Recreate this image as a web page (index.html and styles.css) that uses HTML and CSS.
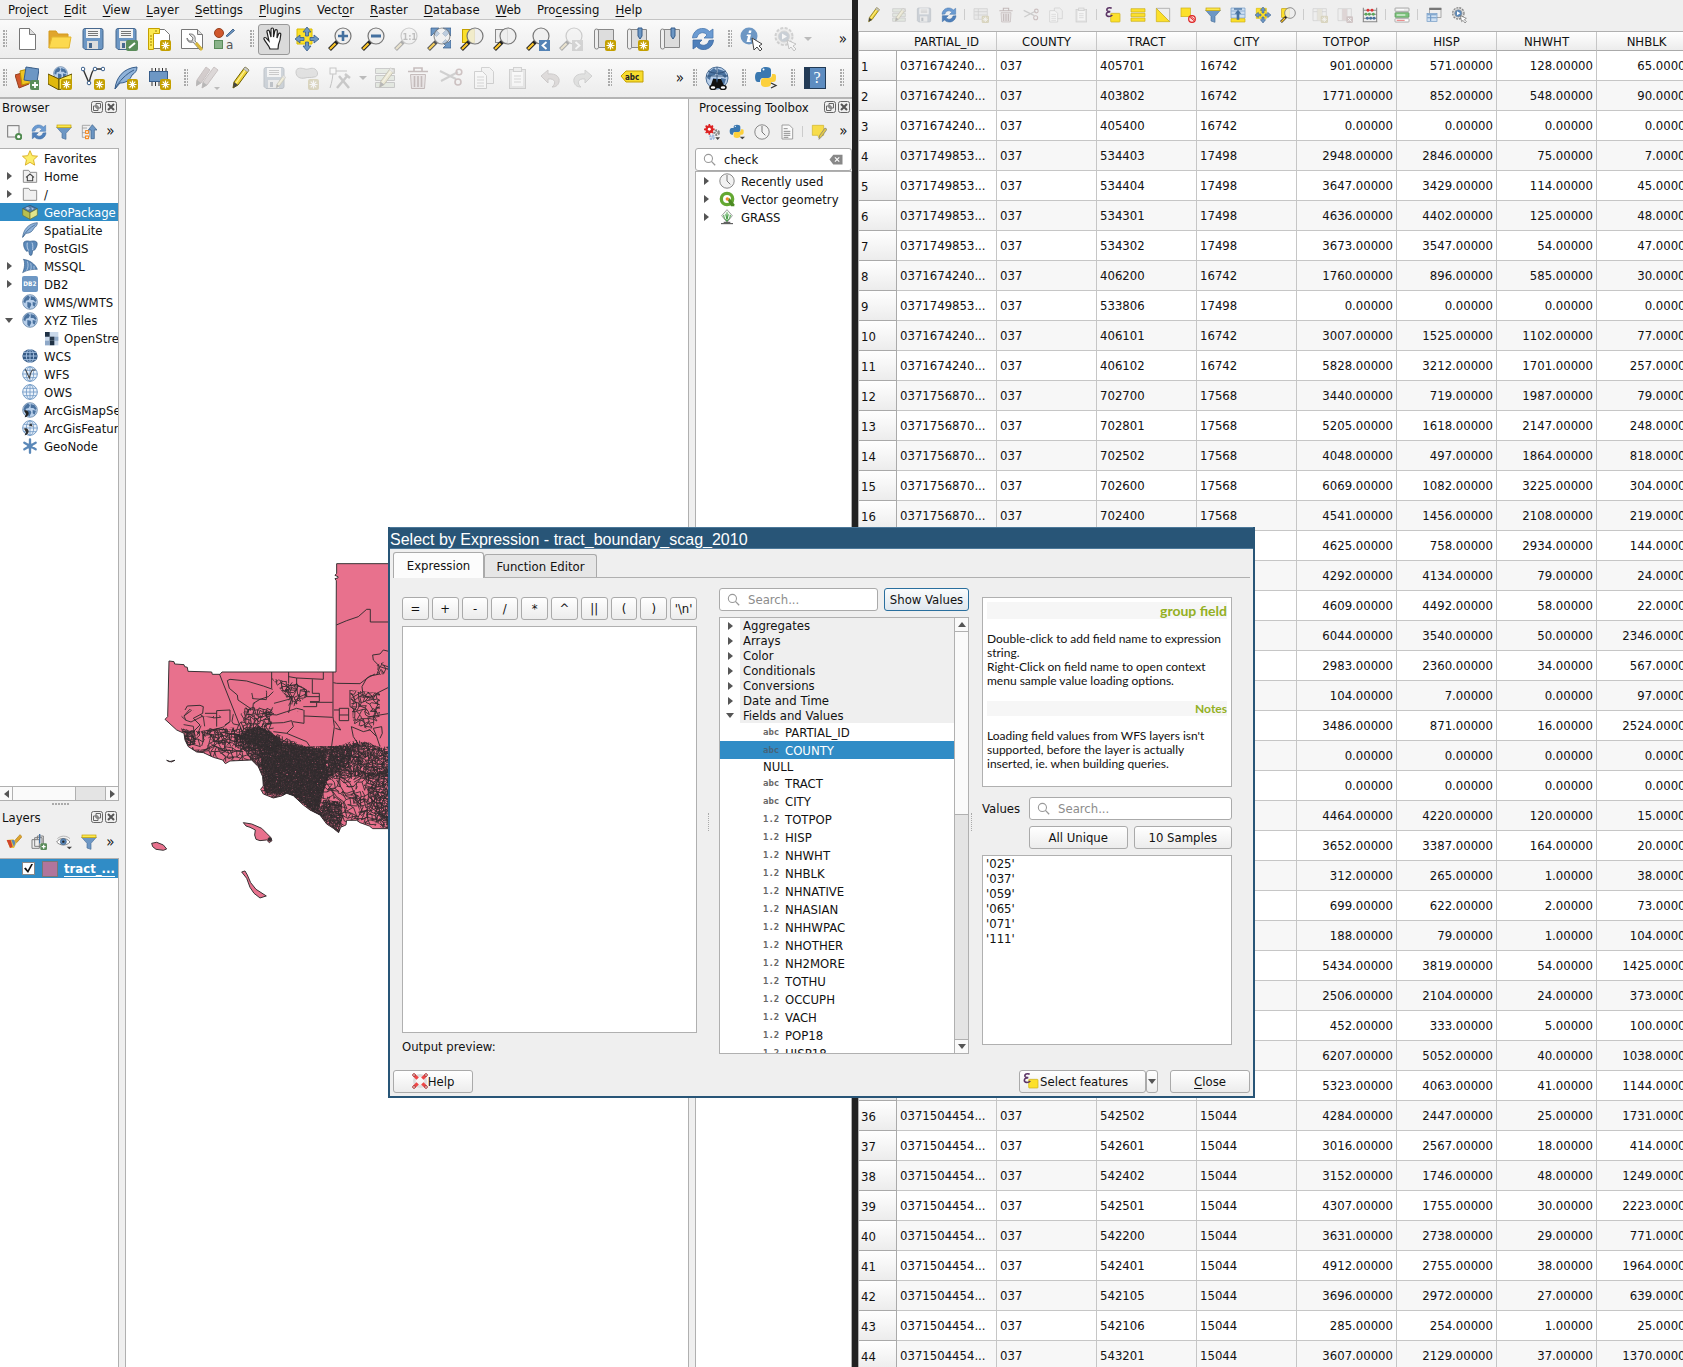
FILE: index.html
```html
<!DOCTYPE html>
<html lang="en">
<head>
<meta charset="utf-8">
<title>QGIS - Select by Expression</title>
<link rel="stylesheet" href="styles.css">
</head>
<body>
<svg class="defs" aria-hidden="true">
  <symbol id="star" viewBox="0 0 24 24"><rect x="13" y="13" width="11" height="11" rx="2" fill="#c4a000"/><path d="M18.500 14.500v8M14.500 18.500h8M15.700 15.700l5.600 5.600M21.300 15.700l-5.600 5.600" stroke="#fff" stroke-width="1.200"/></symbol>
  <symbol id="new" viewBox="0 0 24 24"><path d="M4.500 1.500h10l6 6v15h-16z" fill="#fff" stroke="#777"/><path d="M14.500 1.500v6h6" fill="#ddd" stroke="#777"/></symbol>
  <symbol id="open" viewBox="0 0 24 24"><path d="M1 21V4h7l2 3h10v3" fill="#e0a52c" stroke="#d49a1c"/><path d="M1 21l3-11h19l-2 11z" fill="#fcd94f" stroke="#e3b62f"/></symbol>
  <symbol id="save" viewBox="0 0 24 24"><path d="M2 3.500q0-2 2-2h16q2 0 2 2v17q0 2-2 2H4l-2-2z" fill="#6d97c4" stroke="#47688e"/><rect x="5" y="2" width="14" height="9" fill="#f3f3f3"/><path d="M7 4.500h10M7 6.500h10M7 8.500h10" stroke="#555" stroke-width=".8"/><rect x="6" y="14" width="11" height="8" fill="#ddd"/><rect x="8" y="16" width="3" height="5" fill="#47688e"/></symbol>
  <symbol id="saveas" viewBox="0 0 24 24"><use href="#save"/><rect x="12" y="13" width="12" height="11" rx="2" fill="#5a8c5a"/><path d="M15 21l6-5" stroke="#fff" stroke-width="2"/></symbol>
  <symbol id="layout" viewBox="0 0 24 24"><path d="M2.500 2.500h15l5 5v14h-20z" fill="#fff" stroke="#777"/><path d="M1.500 1.500h11v5h-6v16h-5z" fill="#fce94f" stroke="#c4a000"/><path d="M3 9h2M3 12h2M3 15h2M3 18h2M9 3v2" stroke="#a08000"/><use href="#star"/></symbol>
  <symbol id="layoutm" viewBox="0 0 24 24"><path d="M1.500 2.500h16l5 5v14h-21z" fill="#fff" stroke="#777"/><path d="M17.500 2.500v5h5" fill="#ddd" stroke="#777"/><path d="M9 7l4 4-1 3-3 0-2-3c0 4 3 5 6 4l7 8 2-2-7-7c1-4-1-7-4-7z" fill="#ddd" stroke="#666" stroke-width=".8"/><path d="M16 16l6 7" stroke="#d8b83c" stroke-width="3"/></symbol>
  <symbol id="style" viewBox="0 0 24 24"><circle cx="6" cy="6" r="4.500" fill="#d0572c" stroke="#96401f"/><path d="M13 9L20 2l1.500 1.500-7 6z" fill="#6d97c4" stroke="#47688e"/><rect x="1.500" y="13.500" width="8" height="8" fill="#8ab38a" stroke="#5a8c5a"/><text x="13" y="22" font-family="DejaVu Sans" font-size="12" fill="#555">a</text></symbol>
  <symbol id="hand" viewBox="0 0 24 24"><path d="M8 22c-1-4-5-7-6-10-.5-2 2-2 3 0l2 2L5 5c-.5-2 2-2.500 2.500-.5L9 10 9 2.500c0-2 2.500-2 2.500 0V10l1.300-6c.4-2 2.700-1.600 2.500.3L15 11l1.500-4c.7-1.600 2.500-1 2.300.5-.3 4-1 7-2.300 10L16 22z" fill="#fff" stroke="#222" stroke-width="1.200"/></symbol>
  <symbol id="arrows4" viewBox="0 0 24 24"><path d="M12 0l4 5h-2.500v4h-3V5H8zM12 24l4-5h-2.500v-4h-3v4H8zM0 12l5-4v2.500h4v3H5V16zM24 12l-5-4v2.500h-4v3h4V16z" fill="#6d97c4" stroke="#375d8a" stroke-width=".8"/></symbol>
  <symbol id="pansel" viewBox="0 0 24 24"><path d="M2 2h15v15H2z" fill="#fce02a" stroke="#d6ba00"/><use href="#arrows4"/></symbol>
  <symbol id="mag" viewBox="0 0 24 24"><path d="M9.500 14.500L1.500 22.500" stroke="#222" stroke-width="4"/><path d="M7.500 16.500L2 22" stroke="#fcc62a" stroke-width="2.200"/><circle cx="15" cy="9" r="8" fill="#eee" fill-opacity=".82" stroke="#777" stroke-width="1.200"/></symbol>
  <symbol id="zin" viewBox="0 0 24 24"><use href="#mag"/><path d="M15 4v10M10 9h10" stroke="#44709f" stroke-width="2.600"/></symbol>
  <symbol id="zout" viewBox="0 0 24 24"><use href="#mag"/><path d="M10 9h10" stroke="#44709f" stroke-width="3"/></symbol>
  <symbol id="z11" viewBox="0 0 24 24"><use href="#mag"/><text x="8.500" y="13" font-family="DejaVu Sans Condensed" font-weight="bold" font-size="9" fill="#555">1:1</text></symbol>
  <symbol id="zfull" viewBox="0 0 24 24"><path d="M4 1h8L9.500 3.500l3 3-3 3-3-3L4 9zM24 1v8l-2.500-2.500-3 3-3-3 3-3L16 1zM24 21h-8l2.500-2.500-3-3 3-3 3 3L24 13z" fill="#6d97c4" stroke="#375d8a" stroke-width=".7"/><use href="#mag" opacity=".75"/></symbol>
  <symbol id="zsel" viewBox="0 0 24 24"><rect x="2.500" y="2.500" width="12" height="13" fill="#fce02a" stroke="#c4a000"/><use href="#mag"/></symbol>
  <symbol id="zlay" viewBox="0 0 24 24"><rect x="2.500" y="2.500" width="12" height="13" fill="#eee" stroke="#888"/><use href="#mag"/></symbol>
  <symbol id="zlast" viewBox="0 0 24 24"><use href="#mag"/><rect x="13" y="13" width="11" height="11" fill="#5382b5"/><path d="M20.500 15l-4 3.500 4 3.500" fill="none" stroke="#fff" stroke-width="1.800"/></symbol>
  <symbol id="znext" viewBox="0 0 24 24"><use href="#mag"/><rect x="13" y="13" width="11" height="11" fill="#999"/><path d="M16.500 15l4 3.500-4 3.500" fill="none" stroke="#fff" stroke-width="1.800"/></symbol>
  <symbol id="book" viewBox="0 0 24 24"><path d="M4 2.500h17.500v18H4z" fill="#ddd" stroke="#888"/><path d="M2.500 20V4q0-2 2-2t2 2v16.500q0 1.500-2 1.500t-2-2z" fill="#eee" stroke="#888"/></symbol>
  <symbol id="newmap" viewBox="0 0 24 24"><use href="#book"/><use href="#star"/></symbol>
  <symbol id="marks" viewBox="0 0 24 24"><use href="#book"/><path d="M13 1h4v8l-2 3-2-3z" fill="#6d97c4" stroke="#375d8a"/></symbol>
  <symbol id="newmark" viewBox="0 0 24 24"><use href="#marks"/><use href="#star"/></symbol>
  <symbol id="refresh" viewBox="0 0 24 24"><path d="M1.500 11C2 4 8 1 12 1.500c3 0 5 1.500 6.500 3L22 2v9h-9l3-3c-3-4-9-2.500-10 2.500z" fill="#6b9bd2" stroke="#4a79b0" stroke-width=".8"/><path d="M22.500 13c-.5 7-6.500 10-10.500 9.500-3 0-5-1.500-6.500-3L2 22v-9h9l-3 3c3 4 9 2.500 10-2.500z" fill="#4f80bb" stroke="#3d6ba3" stroke-width=".8"/></symbol>
  <symbol id="ident" viewBox="0 0 24 24"><circle cx="9" cy="9" r="8.500" fill="#6d97c4"/><path d="M9 3.500h2.500L11 6H8.500zM7 7.500h4l-1.500 6H11l-.5 1.500H6.500l1.500-6H6.500z" fill="#fff"/><path d="M12 11l2 12 3-3 3 4 2-2-3-3 3-2z" fill="#fff" stroke="#444"/></symbol>
  <symbol id="gearrun" viewBox="0 0 24 24"><circle cx="11" cy="9.500" r="8.500" fill="#ddd" stroke="#888" stroke-width="2" stroke-dasharray="3 1.500"/><circle cx="11" cy="9.500" r="5.500" fill="#5b88b8" stroke="#999"/><path d="M9 6.500v6l5-3z" fill="#fff"/><path d="M14 13l2 9 2-2 3 4 2-2-3-3 3-2z" fill="#fff" stroke="#666"/></symbol>
  <symbol id="data" viewBox="0 0 24 24"><path d="M0 9l10-3 4 12-10 4z" fill="#d0572c" stroke="#96401f"/><path d="M5 5l12-3 1 14-11 3z" fill="#f0c422" stroke="#b89000"/><path d="M11 1l13 2-2 13-13-2z" fill="#6d97c4" stroke="#375d8a"/><rect x="15" y="14" width="10" height="10" rx="2" fill="#5a8c5a"/><path d="M20 16v6M17 19h6" stroke="#fff" stroke-width="1.800"/></symbol>
  <symbol id="globe" viewBox="0 0 24 24"><circle cx="12" cy="12" r="11" fill="#b8cfea" stroke="#4f7197"/><path d="M4 6l5-4 3 3-2 4-4 1-1 4-3-2zM13 3l6 2 3 5-2 2-3-3-4 0zM8 12l5 1 1 3-3 6-3-3zM16 12l5 1-2 6-3-2z" fill="#4a729f"/></symbol>
  <symbol id="gpkg" viewBox="0 0 24 24"><use href="#globe" x="5" y="0" width="15" height="15"/><path d="M0 8l11 5v11L0 18z" fill="#e0b80e" stroke="#5d4c00"/><path d="M24 8l-13 5v11l13-6z" fill="#fce94f" stroke="#5d4c00"/></symbol>
  <symbol id="gpkgn" viewBox="0 0 24 24"><use href="#gpkg"/><use href="#star"/></symbol>
  <symbol id="vee" viewBox="0 0 24 24"><path d="M2 3l6 14c2-9 4-14 6-14h8" fill="none" stroke="#333" stroke-width="1.400"/><g fill="#fff" stroke="#375d8a"><circle cx="2" cy="3" r="1.800"/><circle cx="8" cy="17" r="1.800"/><circle cx="14" cy="3" r="1.800"/><circle cx="22" cy="3" r="1.800"/></g><use href="#star"/></symbol>
  <symbol id="feather" viewBox="0 0 24 24"><path d="M1 23C2 12 9 2 23 1c0 4-2 6-5 8-2 5-6 8-12 8z" fill="#8fb2d9" stroke="#375d8a"/><path d="M1 23C5 15 12 8 20 4" fill="none" stroke="#375d8a"/></symbol>
  <symbol id="feathern" viewBox="0 0 24 24"><use href="#feather"/><use href="#star"/></symbol>
  <symbol id="chip" viewBox="0 0 24 24"><path d="M5 2v18M8.500 2v18M12 2v18M15.500 2v18M19 2v18" stroke="#333"/><rect x="2.500" y="5.500" width="18" height="10" fill="#6d97c4" stroke="#375d8a"/><use href="#star"/></symbol>
  <symbol id="pencil" viewBox="0 0 24 24"><path d="M4 22l1-6L16 1l4 3L9 19z" fill="#f0d43a" stroke="#6f6000"/><path d="M7 17L17 3" stroke="#fff4a0" stroke-width="1.200"/><path d="M4 22l1-6 4 3z" fill="#444"/><path d="M16 1l4 3-1.500 2-4-3z" fill="#ccc" stroke="#888" stroke-width=".5"/></symbol>
  <symbol id="pencils" viewBox="0 0 24 24"><path d="M0 20l1-6L10 1l4 3L5 17z" fill="#a77" stroke="#855"/><path d="M6 22l1-6L18 1l4 3-11 15z" fill="#b99" stroke="#855"/><path d="M0 20l1-6 4 3zM6 22l1-6 4 3z" fill="#444"/><path d="M18 21h6l-3 3z" fill="#555"/></symbol>
  <symbol id="saveed" viewBox="0 0 24 24"><use href="#save"/><use href="#pencil" x="12" y="9" width="14" height="14"/></symbol>
  <symbol id="blob" viewBox="0 0 24 24"><path d="M1 6c0-5 6-4 9-3s6-2 10 0c4 3 3 8-1 8-4 1-6 0-9 1-5 1-9-1-9-6z" fill="#bbb" stroke="#777"/><use href="#star"/></symbol>
  <symbol id="vertex" viewBox="0 0 24 24"><path d="M2 22C4 16 5 10 5 5h14" fill="none" stroke="#666"/><rect x="2" y="2" width="6" height="6" fill="#fff" stroke="#666"/><path d="M9 22L20 9M11 10l10 12M17 8l5 4" stroke="#777" stroke-width="2.500"/></symbol>
  <symbol id="modify" viewBox="0 0 24 24"><path d="M2.500 2.500h19v5h-19zM2.500 9.500h19v5h-19zM2.500 16.500h19v5h-19z" fill="#bda" stroke="#777"/><use href="#pencil" x="3" y="1" width="22" height="22"/></symbol>
  <symbol id="trash" viewBox="0 0 24 24"><path d="M4.500 8.500h15l-1 14h-13z" fill="#e2c8cc" stroke="#844"/><path d="M2 5.500h20M8 5V2h8v3M8.500 10v11M12 10v11M15.500 10v11" fill="none" stroke="#844" stroke-width="1.600"/></symbol>
  <symbol id="cut" viewBox="0 0 24 24"><path d="M1 5l16 8M2 15l17-9" stroke="#888" stroke-width="2"/><circle cx="20" cy="6" r="2.800" fill="none" stroke="#a55" stroke-width="1.600"/><circle cx="19" cy="16" r="3" fill="none" stroke="#a55" stroke-width="1.600"/></symbol>
  <symbol id="copy" viewBox="0 0 24 24"><path d="M9.500 1.500h8l4 4v12h-12z" fill="#eee" stroke="#888"/><path d="M2.500 5.500h8l4 4v13h-12z" fill="#fff" stroke="#888"/><path d="M5 11h7M5 14h7M5 17h7M5 20h7" stroke="#999"/></symbol>
  <symbol id="paste" viewBox="0 0 24 24"><rect x="4.500" y="3.500" width="16" height="19" fill="#ccc" stroke="#888"/><rect x="7" y="6" width="11" height="14" fill="#fff"/><rect x="8.500" y="1.500" width="8" height="4" fill="#ddd" stroke="#888"/><path d="M9 10h7M9 13h7M9 16h7" stroke="#999"/></symbol>
  <symbol id="undo" viewBox="0 0 24 24"><path d="M3 10l7-6v4c9-1 12 4 11 8-1 4-4 5-7 5 4-3 4-9-4-8v4z" fill="#c0a8a4" stroke="#8a7774"/></symbol>
  <symbol id="redo" viewBox="0 0 24 24"><path d="M21 10l-7-6v4C5 7 2 12 3 16c1 4 4 5 7 5-4-3-4-9 4-8v4z" fill="#b9bbb8" stroke="#888"/></symbol>
  <symbol id="abc" viewBox="0 0 24 24"><path d="M1 10l5-5h17v11H6z" fill="#f7dc2e" stroke="#c4a000"/><text x="5" y="13.500" font-family="DejaVu Sans Condensed" font-weight="bold" font-size="8" fill="#222">abc</text></symbol>
  <symbol id="metas" viewBox="0 0 24 24"><use href="#globe"/><path d="M1 10h22M12 1v14M3 5c6 3 12 3 18 0" fill="none" stroke="#27466d" stroke-width=".8"/><path d="M5 22l3-9h3l1 4 1-4h3l4 9z" fill="#111"/><ellipse cx="8" cy="21.500" rx="3" ry="2" fill="#fff" stroke="#111" stroke-width="1.500"/><ellipse cx="18" cy="21.500" rx="3" ry="2" fill="#fff" stroke="#111" stroke-width="1.500"/></symbol>
  <symbol id="py" viewBox="0 0 24 24"><path d="M7 6V4c0-2 2-3 5-3s5 1 5 3v5c0 2-1 3-3 3H9c-2 0-3 1-3 4H4c-2 0-3-2-3-5s1-5 3-5h8z" fill="#3a78b0"/><path d="M17 16v2c0 2-2 3-5 3s-5-1-5-3v-3c0-2 1-3 3-3h5c2 0 3-1 3-4h2c2 0 2 1 2 4s-1 4-3 4h-7z" fill="#fcd03c"/><circle cx="9.500" cy="3.500" r="1" fill="#fff"/></symbol>
  <symbol id="pymenu" viewBox="0 0 24 24"><use href="#py"/><path d="M16 19h8l-4 4z" fill="#444"/></symbol>
  <symbol id="pycon" viewBox="0 0 24 24"><use href="#py"/><path d="M17 17l5 2.500-5 2.500" fill="none" stroke="#333" stroke-width="1.300"/></symbol>
  <symbol id="helpbook" viewBox="0 0 24 24"><rect x="1.500" y="1.500" width="21" height="21" fill="#5d8cc0" stroke="#223a55"/><path d="M2 2h5v20H2z" fill="#223a55"/><text x="10.500" y="17" font-family="Liberation Serif" font-size="16" fill="#fff">?</text></symbol>
  <symbol id="addlayer" viewBox="0 0 24 24"><rect x="2.500" y="2.500" width="17" height="17" fill="#f4f4f4" stroke="#777" stroke-width="1.500"/><circle cx="19" cy="19" r="4" fill="#fff" stroke="#4f8a4f" stroke-width="3"/></symbol>
  <symbol id="funnel" viewBox="0 0 24 24"><path d="M1 5h22l-8 9v9l-6-2v-7z" fill="#6d97c4" stroke="#4a6f9a"/><rect x="1.500" y="1.500" width="21" height="4" fill="#fce94f" stroke="#c4a000"/></symbol>
  <symbol id="collapse" viewBox="0 0 24 24"><path d="M2 2v18M2 6h7M2 13h5M2 20h5M2 2h12M13 10v10" fill="none" stroke="#888"/><rect x="7" y="10" width="4" height="4" fill="#fff" stroke="#f57900" stroke-width="1.500"/><rect x="7" y="18" width="4" height="4" fill="#fff" stroke="#f57900" stroke-width="1.500"/><path d="M17 1l7 8h-4v13h-5V9h-4z" fill="#6d97c4" stroke="#375d8a"/></symbol>
  <symbol id="gears" viewBox="0 0 24 24"><circle cx="8" cy="8" r="4.500" fill="none" stroke="#d22" stroke-width="3"/><path d="M8 0v16M0 8h16M2.500 2.500l11 11M13.500 2.500l-11 11" stroke="#d22" stroke-width="2.400"/><circle cx="8" cy="8" r="2.200" fill="#fff"/><circle cx="19" cy="13" r="3" fill="none" stroke="#888" stroke-width="4" stroke-dasharray="2.400 1.200"/><circle cx="12" cy="20" r="2.500" fill="none" stroke="#9fb8dc" stroke-width="4" stroke-dasharray="2.400 1.200"/><path d="M17 20h7l-3.500 4z" fill="#444"/></symbol>
  <symbol id="clock" viewBox="0 0 24 24"><circle cx="12" cy="12" r="10.800" fill="#f2f2f2" stroke="#888" stroke-width="1.500"/><path d="M12 3v9l5 5" fill="none" stroke="#777" stroke-width="1.500"/></symbol>
  <symbol id="doc" viewBox="0 0 24 24"><path d="M4.500 1.500h11l5 5v16h-16z" fill="#fafafa" stroke="#999" stroke-width="1.400"/><path d="M7 7h6M7 11h10M7 14h10M7 17h10M7 20h7" stroke="#888" stroke-width="1.400"/></symbol>
  <symbol id="note" viewBox="0 0 24 24"><path d="M2 2h17v15h-5l-2 4-2-4H2z" fill="#f7dc4a" stroke="#cdb22a"/><path d="M12 23l1-6 8-11 3 2-8 11z" fill="#e2c84a" stroke="#777"/></symbol>
  <symbol id="search" viewBox="0 0 24 24"><circle cx="10" cy="10" r="7.500" fill="none" stroke="#999" stroke-width="2"/><path d="M15.500 15.500l7 7" stroke="#999" stroke-width="2.400"/></symbol>
  <symbol id="clear" viewBox="0 0 24 24"><path d="M0 12l7-9h17v18H7z" fill="#888"/><path d="M10 8l8 8M18 8l-8 8" stroke="#fff" stroke-width="2"/></symbol>
  <symbol id="fav" viewBox="0 0 24 24"><path d="M12 1l3.300 7.500 8 .8-6 5.400 1.700 8-7-4.200-7 4.200 1.700-8-6-5.400 8-.8z" fill="#fcee6a" stroke="#d8a818" stroke-width="1.300"/></symbol>
  <symbol id="folder" viewBox="0 0 24 24"><path d="M2 21.500V3.500h8l2 3h10v15z" fill="#f0f0f0" stroke="#888" stroke-width="1.400"/></symbol>
  <symbol id="home" viewBox="0 0 24 24"><use href="#folder"/><path d="M6 14l6-5 6 5M8 13v6h8v-6" fill="none" stroke="#444" stroke-width="1.600"/></symbol>
  <symbol id="box" viewBox="0 0 24 24"><path d="M1 7l11-5 11 5-11 6z" fill="#517ca8" stroke="#2e4f70"/><path d="M5 6l4-2 3 3-3 2zM14 5l4 2-3 2z" fill="#a9c4e4"/><path d="M1 7l11 6v10L1 17z" fill="#b8bf4e" stroke="#6d7430"/><path d="M23 7l-11 6v10l11-6z" fill="#e2e58b" stroke="#6d7430"/></symbol>
  <symbol id="pg" viewBox="0 0 24 24"><path d="M3 3c4-3 8-1 9-1s7-2 10 1c2 3 0 8-3 12-1 1-3 0-3 1l-1 6c-2 2-4 1-4-1l-1-5-3 1C4 15 1 7 3 3z" fill="#5b88b8" stroke="#375d8a"/><path d="M8 4c-1 5 0 9 2 12M15 4c2 4 1 8 1 11" fill="none" stroke="#cfe0f2" stroke-width="1.200"/></symbol>
  <symbol id="ms" viewBox="0 0 24 24"><path d="M2 2c3 3 2 14-1 20 5-3 10-5 22-5-3-8-12-14-21-15z" fill="#5b88b8" stroke="#375d8a"/><path d="M8 5c2 5 1 10-1 14M13 8c1 4 1 7 0 10M18 12v5" fill="none" stroke="#cfe0f2"/></symbol>
  <symbol id="db2" viewBox="0 0 24 24"><rect width="24" height="24" rx="3" fill="#6d97c4"/><text x="2" y="15.500" font-family="DejaVu Sans Condensed" font-weight="bold" font-size="9.500" fill="#fff">DB2</text></symbol>
  <symbol id="osm" viewBox="0 0 24 24"><rect x="3" y="3" width="20" height="20" fill="#c9d8ea"/><path d="M3 3h7v7H3zM10 16h7v7h-7z" fill="#1f3145"/><path d="M3 16h7v7H3zM17 10h6v6h-6z" fill="#8fa9c8"/><path d="M10 10h7v6h-7z" fill="#27384b"/></symbol>
  <symbol id="grid" viewBox="0 0 24 24"><circle cx="12" cy="12" r="11" fill="#e9f1fa" stroke="#6d97c4" stroke-width="1.400"/><path d="M1 12h22M3 6.500h18M3 17.500h18M12 1v22" stroke="#6d97c4" stroke-width="1.200"/><ellipse cx="12" cy="12" rx="5.500" ry="11" fill="none" stroke="#6d97c4" stroke-width="1.200"/></symbol>
  <symbol id="wcs" viewBox="0 0 24 24"><ellipse cx="12" cy="12" rx="11.500" ry="10" fill="#355a85"/><path d="M1 12h22M3 6.500h18M3 17.500h18M12 2v20" stroke="#a9c4e4" stroke-width="1.400"/><ellipse cx="12" cy="12" rx="5.500" ry="10" fill="none" stroke="#a9c4e4" stroke-width="1.400"/></symbol>
  <symbol id="wfs" viewBox="0 0 24 24"><use href="#grid"/><path d="M5 5l6 13c2-8 3-12 5-12h4" fill="none" stroke="#444" stroke-width="1.600"/></symbol>
  <symbol id="arcm" viewBox="0 0 24 24"><use href="#globe"/><path d="M3 13c4-2 7 1 7 4s-3 6-6 6l2-5z" fill="#222"/></symbol>
  <symbol id="arcf" viewBox="0 0 24 24"><use href="#grid"/><path d="M3 13c4-2 7 1 7 4s-3 6-6 6l2-5zM10 8l4-3 2 5z" fill="#333"/></symbol>
  <symbol id="geonode" viewBox="0 0 24 24"><path d="M12 2v20M3.500 7l17 10M20.500 7l-17 10" stroke="#5b88b8" stroke-width="3.500" stroke-linecap="round"/><circle cx="12" cy="12" r="4" fill="#5b88b8"/></symbol>
  <symbol id="brush" viewBox="0 0 24 24"><path d="M13 10L21 1l3 3-8 9z" fill="#e0a52c" stroke="#a87a1c"/><path d="M1 9l10-1 5 5-4 8H6z" fill="#e8c03c"/><path d="M1 9l6 0 3 10-4 2z" fill="#d0452c"/><path d="M8 9l4 0 2 4-2 6z" fill="#5b88b8"/></symbol>
  <symbol id="addgrp" viewBox="0 0 24 24"><path d="M1.500 8.500h11v13h-11zM5.500 5.500h11v13h-11z" fill="#eee" stroke="#777" stroke-width="1.400"/><path d="M9.500 8V3h9v13h-4" fill="none" stroke="#777" stroke-width="1.400"/><path d="M13 0v14" stroke="#44709f" stroke-width="2"/><rect x="14" y="14" width="10" height="10" rx="2" fill="#5a8c5a"/><path d="M19 16v6M16 19h6" stroke="#fff" stroke-width="1.800"/></symbol>
  <symbol id="eye" viewBox="0 0 24 24"><path d="M1 12C5 5 16 5 21 12c-5 6-15 6-20 0z" fill="#fff" stroke="#888" stroke-width="1.500"/><circle cx="11" cy="11.500" r="4.500" fill="#5b88b8" stroke="#375d8a"/><circle cx="11" cy="11.500" r="1.800" fill="#222"/><path d="M2 7C7 2 16 2 21 7" fill="none" stroke="#999"/><path d="M16 19h8l-4 4z" fill="#444"/></symbol>
  <symbol id="qgis" viewBox="0 0 24 24"><circle cx="12" cy="12" r="8.500" fill="none" stroke="#64a832" stroke-width="5"/><path d="M12 12l4-1 7 9v3h-5z" fill="#4c8a22"/><circle cx="12.500" cy="12" r="2.600" fill="#f08a2c"/></symbol>
  <symbol id="grass" viewBox="0 0 24 24"><path d="M12 1l8 9-8 10L4 10z" fill="#eef7ee" stroke="#777"/><path d="M12 19V5M12 18C9 16 7 13 7 9M12 18c3-2 5-5 5-9M12 15l-2-7M12 15l2-7" fill="none" stroke="#3f9a3f" stroke-width="1.400"/><path d="M3 22h18M7 20h10" stroke="#444" stroke-width="1.500"/></symbol>
  <symbol id="eps" viewBox="0 0 24 24"><rect x="8.500" y="9.500" width="14" height="13" rx="1" fill="#fce02a" stroke="#c9ad1a"/><path d="M10 2C6 0 2 2 3 5c1 2 4 2 5 2-3 0-6 1-6 4 0 4 6 4 9 1" fill="none" stroke="#5c3566" stroke-width="2.400"/></symbol>
  <symbol id="selall" viewBox="0 0 24 24"><path d="M1.500 2.500h21v5h-21zM1.500 9.500h21v5h-21zM1.500 16.500h21v5h-21z" fill="#fce02a" stroke="#c9ad1a"/></symbol>
  <symbol id="invert" viewBox="0 0 24 24"><path d="M2 2h20v20z" fill="#eee" stroke="#999"/><path d="M2 2l20 20H2z" fill="#fce02a" stroke="#c9ad1a"/></symbol>
  <symbol id="desel" viewBox="0 0 24 24"><rect x="1.500" y="1.500" width="14" height="13" fill="#fce02a" stroke="#c9ad1a"/><circle cx="18" cy="18" r="5" fill="#fdd" stroke="#d22" stroke-width="1.800"/><path d="M14.500 15l7 6M16 14l6 5" stroke="#d22" stroke-width="1.400"/></symbol>
  <symbol id="movetop" viewBox="0 0 24 24"><path d="M1.500 1.500h21v15h-21z" fill="#cfe0f2" stroke="#6d97c4"/><path d="M2 6h20M2 11h20" stroke="#6d97c4"/><path d="M1.500 17.500h21v5h-21z" fill="#fce02a" stroke="#c9ad1a"/><path d="M12 4l5 6h-3v9h-4v-9H7z" fill="#44709f"/><path d="M6 3h12" stroke="#44709f" stroke-width="2"/></symbol>
  <symbol id="fieldn" viewBox="0 0 24 24"><path d="M1.500 2.500h20v18h-20zM8 3v17M15 3v17M2 7h19" fill="#eee" stroke="#888"/><path d="M8 3h7v17H8z" fill="#dc8"/><use href="#star"/></symbol>
  <symbol id="rown" viewBox="0 0 24 24"><path d="M1.500 2.500h20v16h-20zM2 7h19M2 12h19M8 3v15" fill="#ddd" stroke="#888"/><use href="#star"/></symbol>
  <symbol id="fieldd" viewBox="0 0 24 24"><path d="M1.500 2.500h20v18h-20zM8 3v17M15 3v17" fill="#eee" stroke="#888"/><path d="M8 3h7v17H8z" fill="#d99"/><rect x="14" y="14" width="10" height="10" rx="2" fill="#b66"/><path d="M16.500 16.500l5 5M21.500 16.500l-5 5" stroke="#fff" stroke-width="1.500"/></symbol>
  <symbol id="abacus" viewBox="0 0 24 24"><path d="M2 1v22M22 1v22M1 22h22M2 5h20M2 11h20M2 17h20" fill="none" stroke="#888" stroke-width="1.600"/><g fill="#d33"><circle cx="9" cy="5" r="2.200"/><circle cx="15" cy="5" r="2.200"/></g><g fill="#5aa65a"><circle cx="6" cy="11" r="2.200"/><circle cx="11" cy="11" r="2.200"/><circle cx="17" cy="11" r="2.200"/></g><g fill="#44709f"><circle cx="8" cy="17" r="2.200"/><circle cx="13" cy="17" r="2.200"/><circle cx="18" cy="17" r="2.200"/></g></symbol>
  <symbol id="cond" viewBox="0 0 24 24"><rect x="1.500" y="1.500" width="21" height="5" rx="1" fill="#eee" stroke="#888"/><rect x="1.500" y="8.500" width="21" height="7" rx="1" fill="#7cc47c" stroke="#4f8a4f"/><rect x="1.500" y="17.500" width="21" height="5" rx="1" fill="#fff" stroke="#888"/><path d="M4 4h11M4 12h13" stroke="#fff" stroke-width="1.600"/><path d="M4 20h12" stroke="#d33"/></symbol>
  <symbol id="dock" viewBox="0 0 24 24"><rect x="5.500" y="1.500" width="17" height="14" fill="#eee" stroke="#888"/><path d="M5 3h18" stroke="#777" stroke-width="3"/><rect x="1.500" y="9.500" width="15" height="12" fill="#cfe0f2" stroke="#6d97c4"/><path d="M2 11.500h14M7 12v9M2 16h14" stroke="#6d97c4" stroke-width="1.600"/></symbol>
  <symbol id="life" viewBox="0 0 24 24"><circle cx="12" cy="12" r="8.500" fill="none" stroke="#ddd" stroke-width="4"/><path d="M3.500 3.500l5 5M20.500 3.500l-5 5M3.500 20.500l5-5M20.500 20.500l-5-5" stroke="#ef4646" stroke-width="5"/><g fill="#fff" stroke="#a33" stroke-width="1.500"><circle cx="3" cy="3" r="2"/><circle cx="21" cy="3" r="2"/><circle cx="3" cy="21" r="2"/><circle cx="21" cy="21" r="2"/></g></symbol>
  <symbol id="float" viewBox="0 0 12 12"><rect x=".5" y=".5" width="11" height="11" rx="2" fill="none" stroke="#666"/><path d="M5 2.500h4.500V7H5zM2.500 5H7v4.500H2.500z" fill="#eee" stroke="#666"/></symbol>
  <symbol id="close" viewBox="0 0 12 12"><rect x=".5" y=".5" width="11" height="11" rx="2" fill="none" stroke="#666"/><path d="M3 3l6 6M9 3L3 9" stroke="#555" stroke-width="2"/></symbol>
</svg>

<div class="desktop">
  <main class="qgis">
    <nav class="menubar">
      <a href="#">Pro<u>j</u>ect</a><a href="#"><u>E</u>dit</a><a href="#"><u>V</u>iew</a><a href="#"><u>L</u>ayer</a><a href="#"><u>S</u>ettings</a><a href="#"><u>P</u>lugins</a><a href="#">Vect<u>o</u>r</a><a href="#"><u>R</u>aster</a><a href="#"><u>D</u>atabase</a><a href="#"><u>W</u>eb</a><a href="#">Pro<u>c</u>essing</a><a href="#"><u>H</u>elp</a>
    </nav>
    <div class="toolbar" id="project-bar"></div>
    <div class="toolbar last" id="edit-bar"></div>
    <div class="work">
      <aside class="dock left-dock">
        <section class="panel browser">
          <header class="dock-title"><h2>Browser</h2><button aria-label="Float"><svg><use href="#float"/></svg></button><button aria-label="Close panel"><svg><use href="#close"/></svg></button></header>
          <div class="minibar" data-icons="addlayer refresh funnel collapse"><button class="more">»</button></div>
          <ul class="tree" id="browser-tree"></ul>
          <div class="hscroll"><i class="tri l"></i><b></b><span></span><i class="tri r"></i></div>
        </section>
        <div class="hsplit"></div>
        <section class="panel layers">
          <header class="dock-title"><h2>Layers</h2><button aria-label="Float"><svg><use href="#float"/></svg></button><button aria-label="Close panel"><svg><use href="#close"/></svg></button></header>
          <div class="minibar" data-icons="brush addgrp eye funnel"><button class="more">»</button></div>
          <ul class="tree">
            <li class="layer selected"><input type="checkbox" id="lyr" checked><span class="swatch"></span><label for="lyr">tract_...</label></li>
          </ul>
        </section>
      </aside>
      <section class="canvas" aria-label="Map canvas">
        <svg class="map" id="map"></svg>
      </section>
      <aside class="dock right-dock">
        <header class="dock-title"><h2>Processing Toolbox</h2><button aria-label="Float"><svg><use href="#float"/></svg></button><button aria-label="Close panel"><svg><use href="#close"/></svg></button></header>
        <div class="minibar" data-icons="gears pymenu clock doc | note"><button class="more">»</button></div>
        <div class="field"><svg><use href="#search"/></svg><input type="text" value="check" aria-label="Search algorithms"><svg class="clr"><use href="#clear"/></svg></div>
        <ul class="tree">
          <li><i class="exp"></i><svg><use href="#clock"/></svg>Recently used</li>
          <li><i class="exp"></i><svg><use href="#qgis"/></svg>Vector geometry</li>
          <li><i class="exp"></i><svg><use href="#grass"/></svg>GRASS</li>
        </ul>
      </aside>
    </div>
  </main>

  <section class="attributes">
    <div class="minibar wide" data-icons="pencil -modify -save refresh | -rown -trash -cut -copy -paste | eps selall invert desel funnel movetop pansel zsel | -fieldn -fieldd abacus | cond | dock gearrun"></div>
    <div class="table-view">
      <table>
        <thead><tr><th class="corner"></th><th>PARTIAL_ID</th><th>COUNTY</th><th>TRACT</th><th>CITY</th><th>TOTPOP</th><th>HISP</th><th>NHWHT</th><th>NHBLK</th></tr></thead>
        <tbody id="rows"></tbody>
      </table>
    </div>
  </section>

  <section class="dialog" role="dialog" aria-label="Select by Expression">
    <h1 class="titlebar">Select by Expression - tract_boundary_scag_2010</h1>
    <div class="tabs" role="tablist"><button class="tab on" role="tab">Expression</button><button class="tab" role="tab">Function Editor</button></div>
    <div class="panes">
      <div class="editor">
        <div class="ops"><button>=</button><button>+</button><button>-</button><button>/</button><button>*</button><button>^</button><button>||</button><button>(</button><button>)</button><button>'\n'</button></div>
        <textarea aria-label="Expression"></textarea>
        <p class="preview">Output preview:</p>
      </div>
      <div class="vsplit first"></div>
      <div class="functions">
        <div class="find">
          <div class="field"><svg><use href="#search"/></svg><input type="text" placeholder="Search..." aria-label="Search functions"></div>
          <button class="default">Show Values</button>
        </div>
        <div class="function-list">
          <ul class="tree" id="functions"></ul>
          <div class="vscroll"><i class="tri u"></i><b></b><span></span><i class="tri d"></i></div>
        </div>
      </div>
      <div class="vsplit"></div>
      <div class="info">
        <article class="help-text">
          <h2>group field</h2>
          <p>Double-click to add field name to expression string.<br>Right-Click on field name to open context menu sample value loading options.</p>
          <h3>Notes</h3>
          <p>Loading field values from WFS layers isn't supported, before the layer is actually inserted, ie. when building queries.</p>
        </article>
        <div class="values-row"><label for="vals">Values</label><div class="field"><svg><use href="#search"/></svg><input id="vals" type="text" placeholder="Search..."></div></div>
        <div class="sample-row"><button>All Unique</button><button>10 Samples</button></div>
        <ul class="values"><li>'025'</li><li>'037'</li><li>'059'</li><li>'065'</li><li>'071'</li><li>'111'</li></ul>
      </div>
    </div>
    <footer class="actions">
      <button class="help"><svg><use href="#life"/></svg>Help</button>
      <div class="split"><button class="select"><svg><use href="#eps"/></svg>Select features</button><button class="drop" aria-label="More select options"><i class="tri d"></i></button></div>
      <button class="close"><span><u>C</u>lose</span></button>
    </footer>
  </section>
</div>
<script src="app.js"></script>
</body>
</html>
```
FILE: styles.css
```css
* { box-sizing: border-box; }
body { margin: 0; background: #efefef; color: #111; font: 13px/15px "DejaVu Sans Condensed", "DejaVu Sans", sans-serif; }
h1, h2, h3, p, ul { margin: 0; padding: 0; font-size: inherit; font-weight: normal; }
ul { list-style: none; }
a { color: inherit; text-decoration: none; }
u { text-underline-offset: 2px; }
button, input, textarea { font: inherit; color: inherit; margin: 0; padding: 0; }
.defs { display: none; }

.desktop { position: relative; height: 100vh; overflow: hidden; display: grid; grid-template-columns: minmax(0, 852fr) minmax(0, 825fr); column-gap: 6px; background: #222; }
.qgis { display: flex; flex-direction: column; min-height: 0; background: #efefef; }
.menubar { display: flex; height: 19px; padding-left: 8px; gap: 16px; line-height: 19px; white-space: nowrap; }

/* main toolbars */
.toolbar { display: flex; align-items: center; height: 39px; padding: 0 4px 0 3px; border-top: 1px solid #c4c4c4; background: linear-gradient(#fafafa, #ececec); }
.toolbar.last { height: 41px; border-top-color: #b4b4b4; border-bottom: 2px solid #b4b4b4; }
.toolbar button { display: grid; place-items: center; width: 33px; height: 31px; padding-right: 1px; flex: none; border: 0; background: none; }
.toolbar button.down { margin-right: 1px; width: 32px; padding: 0; border: 1px solid #999; border-radius: 3px; background: #dadada; }
.toolbar button svg { width: 24px; height: 24px; }
.off svg { opacity: .33; filter: saturate(.4); }
.grip { flex: none; width: 4px; height: 18px; margin: 0 4px 0 8px; background: radial-gradient(circle at 1px 1px, #aaa 1px, transparent 1px) 0 0 / 3px 3px; }
.grip:first-child { margin-left: 0; }
.caret { flex: none; width: 12px; display: grid; place-items: center; }
.caret::before { content: ""; border: 4px solid transparent; border-top-color: #bbb; border-bottom: 0; }
.toolbar .fill { flex: 1; text-align: right; font-size: 15px; padding-right: 1px; }

/* docks */
.work { flex: 1; min-height: 0; display: flex; }
.dock { display: flex; flex-direction: column; min-height: 0; flex: none; }
.left-dock { width: 119px; }
.right-dock { width: 157px; }
.panel { display: flex; flex-direction: column; min-height: 0; }
.browser { height: 702px; flex: none; }
.layers { flex: 1; }
.dock-title { display: flex; align-items: center; height: 16px; padding: 0 2px 0 2px; gap: 2px; }
.right-dock .dock-title { padding: 0 2px 0 4px; }
.dock-title h2 { flex: 1; white-space: nowrap; }
.dock-title button { display: grid; width: 12px; height: 12px; border: 0; background: none; }
.dock-title svg { width: 12px; height: 12px; }
.minibar { display: flex; align-items: center; height: 33px; padding-left: 1px; }
.right-dock .minibar { padding-left: 4px; }
.minibar button { display: grid; place-items: center; flex: none; width: 25px; height: 24px; border: 0; background: none; }
.minibar svg { width: 16px; height: 16px; }
.minibar .more { margin-left: auto; width: 17px; font-size: 15px; }
.minibar hr { flex: none; width: 1px; height: 11px; margin: 0 3px; border: 0; background: #ccc; }
.minibar.wide { padding: 0 0 2px 3px; height: 31px; }
.layers .dock-title { height: 18px; }
.layers .minibar { height: 32px; }

.tree { flex: 1; min-height: 0; overflow: hidden; background: #fff; border: 1px solid #b0b0b0; border-width: 1px 1px 0 0; }
.tree li { display: flex; align-items: center; height: 18px; white-space: nowrap; padding-left: 5px; }
.tree svg { width: 16px; height: 16px; flex: none; margin-right: 6px; }
.tree .exp { flex: none; width: 17px; }
.exp::before { content: ""; display: block; width: 0; border: 4px solid transparent; border-left: 5px solid #555; border-right: 0; margin-left: 2px; }
.exp.open::before { border: 4px solid transparent; border-top: 5px solid #555; border-bottom: 0; margin-left: 0; }
.exp.none::before { border-color: transparent; }
.tree .selected { background: #308cc6; color: #fff; }
.tree .child { padding-left: 26px; }
.tree .child svg { margin-right: 5px; }
.right-dock .tree { border-left-width: 1px; }
.right-dock .tree li { padding-left: 6px; }

.layers .layer { height: 19px; padding-left: 22px; font-weight: bold; text-decoration: underline; text-underline-offset: 3px; }
.layer input { appearance: none; position: relative; width: 13px; height: 13px; margin-right: 7px; background: #fff; border: 1px solid #888; }
.layer input:checked::after { content: ""; position: absolute; inset: 1px; background: #111; clip-path: polygon(0 50%, 20% 40%, 42% 70%, 80% 0, 100% 0, 45% 100%); }
.swatch { width: 16px; height: 16px; margin-right: 6px; background: #b0759c; border: 1px solid #777; }

.tri { display: grid; place-items: center; flex: none; }
.tri::before { content: ""; border: 4px solid transparent; }
.tri.l::before { border-right: 5px solid #555; border-left: 0; }
.tri.r::before { border-left: 5px solid #555; border-right: 0; }
.tri.u::before { border-bottom: 5px solid #555; border-top: 0; }
.tri.d::before { border-top: 5px solid #555; border-bottom: 0; }
.hscroll { display: flex; height: 15px; border: 1px solid #b0b0b0; border-left: 0; background: #fafafa; }
.hscroll .tri { width: 12px; }
.hscroll b { flex: 63; border: 1px solid #b0b0b0; border-width: 0 1px; }
.hscroll span { flex: 30; background: #e4e4e4; border-right: 1px solid #b0b0b0; }
.hsplit { height: 7px; flex: none; background: radial-gradient(circle at 1px 1px, #aaa 1px, transparent 1px) 0 0 / 3px 3px content-box; background-repeat: repeat-x; padding: 2px 50px 2px 52px; }

.canvas { flex: 1; min-width: 0; margin: 0 6px; background: #fff; border: 1px solid #b0b0b0; border-width: 0 1px; overflow: hidden; }
.map { display: block; width: 562px; height: 1000px; overflow: visible; }

/* text fields and push buttons */
.field { display: flex; align-items: center; height: 23px; flex: none; padding: 0 8px 0 7px; background: #fff; border: 1px solid #aaa; border-radius: 3px; }
.field svg { flex: none; width: 13px; height: 13px; }
.field input { flex: 1; min-width: 0; margin-left: 8px; border: 0; outline: 0; background: none; }
.field input::placeholder { color: #8c8c8c; opacity: 1; }
.right-dock .clr { width: 14px; height: 13px; }
.dialog button { border: 1px solid #aaa; border-radius: 3px; background: linear-gradient(#fff, #ececec); height: 23px; white-space: nowrap; }

/* attribute table */
.attributes { display: flex; flex-direction: column; min-height: 0; background: #efefef; }
.table-view { flex: 1; min-height: 0; overflow: hidden; background: #fff; border: 1px solid #b0b0b0; border-width: 1px 0 0 1px; }
table { table-layout: fixed; width: 838px; border-collapse: separate; border-spacing: 0; }
th, td { padding: 0; font-weight: normal; border: 1px solid #c6c6c6; border-width: 0 1px 1px 0; white-space: nowrap; overflow: hidden; }
thead th { width: 100px; height: 19px; background: linear-gradient(#fff, #ececec); border-bottom-color: #aaa; }
thead .corner { width: 38px; border-right: 0; }
tbody tr { height: 30px; }
tbody tr:nth-child(even) td { background: #f7f7f7; }
tbody th { text-align: left; padding: 2px 0 0 2px; background: linear-gradient(#fff, #ececec); border-color: #aaa; }
td { padding-left: 3px; }
td.num { text-align: right; padding-right: 3px; }

/* expression dialog window */
.dialog { position: absolute; left: 388px; top: 527px; width: 867px; height: 571px; display: flex; flex-direction: column; background: #efefef; border: 2px solid #285577; border-top: 0; }
.titlebar { flex: none; height: 22px; padding-top: 2px; overflow: hidden; background: #285577; color: #fff; font: 16px/20px "Liberation Sans", Arial, sans-serif; white-space: nowrap; border: solid #4c7899; border-width: 1px 0; }
.tabs { display: flex; align-items: flex-end; height: 29px; margin: 0 3px; border-bottom: 1px solid #b0b0b0; flex: none; }
.dialog .tab { height: 23px; width: 113px; border-radius: 3px 3px 0 0; border-bottom: 0; background: #e6e6e6; }
.dialog .tab.on { height: 26px; width: 91px; background: #fcfcfc; margin-bottom: -1px; }
.panes { flex: 1; min-height: 0; display: flex; padding: 10px 21px 0 12px; }
.editor { flex: 295; min-width: 0; padding-top: 9px; display: flex; flex-direction: column; }
.ops { display: flex; gap: 3px; margin-bottom: 6px; }
.ops button { flex: 1; min-width: 0; }
textarea { display: block; flex: 1; resize: none; border: 1px solid #b0b0b0; background: #fff; }
.preview { height: 36px; padding-top: 6px; }
.vsplit { width: 13px; flex: none; display: grid; align-items: center; padding: 0 0 13px 2px; }
.vsplit.first { width: 22px; padding-left: 11px; }
.vsplit::before { content: ""; height: 18px; border-left: 1px dotted #aaa; }
.functions { flex: 250; min-width: 0; display: flex; flex-direction: column; margin-bottom: 15px; }
.find { display: flex; gap: 6px; margin-bottom: 6px; }
.find .field { flex: 1; min-width: 0; }
.dialog .default { width: 85px; border-color: #2a6f9e; background: linear-gradient(#fafcfd, #dfe7ee); }
.function-list { flex: 1; min-height: 0; display: flex; border: 1px solid #b0b0b0; background: #fff; }
.function-list .tree { border: 0; }
.function-list .group { height: 15px; padding-left: 6px; background: linear-gradient(90deg, #fff 20px, #efefef 20px); }
.group .exp { width: 17px; }
.function-list .item { padding-left: 43px; }
.function-list .null { height: 15px; padding-left: 43px; }
.kind { width: 22px; color: #666; font: bold 9px/12px "DejaVu Sans Mono", monospace; }
.selected .kind { color: #46647a; }
.vscroll { width: 14px; display: flex; flex-direction: column; border-left: 1px solid #b0b0b0; background: #fafafa; }
.vscroll .tri { height: 13px; }
.vscroll b { flex: 183; border: 1px solid #b0b0b0; border-width: 1px 0; }
.vscroll span { flex: 225; background: #e4e4e4; border-bottom: 1px solid #b0b0b0; }
.info { flex: 250; min-width: 0; display: flex; flex-direction: column; padding-top: 9px; margin-bottom: 24px; }
.help-text { height: 190px; padding: 4px; background: #fff; border: 1px solid #b0b0b0; font: 12px/14px Lato, sans-serif; }
.help-text h2 { background: #f6f6f6; color: #93b023; font: bold 14px/17px Lato, sans-serif; text-align: right; }
.help-text h3 { background: #f6f6f6; color: #93b023; font: bold 12px/15px Lato, sans-serif; text-align: right; }
.help-text p { margin: 13px 0; }
.values-row { display: flex; align-items: center; margin-top: 10px; }
.values-row label { width: 47px; }
.values-row .field { flex: 1; min-width: 0; }
.sample-row { display: flex; gap: 6px; margin: 6px 0 6px 47px; }
.sample-row button { flex: 1; }
.values { flex: 1; background: #fff; border: 1px solid #b0b0b0; padding-left: 3px; }
.actions { display: flex; align-items: center; height: 24px; flex: none; margin: 0 3px 3px; }
.actions svg { width: 16px; height: 16px; flex: none; }
.actions button { display: flex; align-items: center; justify-content: center; }
.help { width: 80px; }
.split { display: flex; margin-left: auto; margin-right: 12px; }
.actions .select { width: 127px; justify-content: flex-start; padding-left: 3px; gap: 1px; }
.drop { width: 12px; }
.close { width: 80px; }
```
FILE: app.js
```js
const use = (id) => `<svg><use href="#${id}"/></svg>`;

// A leading "-" marks a disabled action, "!" the active tool, "|" a separator grip.
function button(token) {
  if (token === "|") return '<span class="grip"></span>';
  if (token === "v") return '<span class="caret"></span>';
  if (token === ">>") return '<span class="fill">»</span>';
  const cls = token[0] === "-" ? "off" : token[0] === "!" ? "down" : "";
  const id = token.replace(/^[-!]/, "");
  return `<button class="${cls}" aria-label="${id}">${use(id)}</button>`;
}
const fillBar = (id, list) => {
  document.getElementById(id).innerHTML = list.split(" ").map(button).join("");
};
fillBar("project-bar", "| new open save saveas layout layoutm style | !hand pansel zin zout -z11 zfull zsel zlay zlast -znext newmap newmark marks refresh | ident -gearrun v >>");
fillBar("edit-bar", "| data gpkgn vee feathern chip | -pencils pencil -saveed -blob -vertex v -modify -trash -cut -copy -paste -undo -redo | abc >> | metas | pycon | helpbook |");

document.querySelectorAll(".minibar").forEach((bar) => {
  const html = bar.dataset.icons.split(" ").map((t) => (t === "|" ? "<hr>" : button(t))).join("");
  bar.insertAdjacentHTML("afterbegin", html);
});

const browser = [
  ["none", "fav", "Favorites"], ["", "home", "Home"], ["", "folder", "/"], ["none", "box", "GeoPackage", "selected"],
  ["none", "feather", "SpatiaLite"], ["none", "pg", "PostGIS"], ["", "ms", "MSSQL"], ["", "db2", "DB2"],
  ["none", "globe", "WMS/WMTS"], ["open", "globe", "XYZ Tiles"], ["none", "osm", "OpenStreetMap", "child"],
  ["none", "wcs", "WCS"], ["none", "wfs", "WFS"], ["none", "grid", "OWS"], ["none", "arcm", "ArcGisMapServer"],
  ["none", "arcf", "ArcGisFeatureServer"], ["none", "geonode", "GeoNode"],
];
document.getElementById("browser-tree").innerHTML = browser
  .map(([exp, icon, text, cls = ""]) => `<li class="${cls}"><i class="exp ${exp}"></i>${use(icon)}${text}</li>`).join("");

const groups = ["Aggregates", "Arrays", "Color", "Conditionals", "Conversions", "Date and Time", "Fields and Values"];
const numeric = "TOTPOP HISP NHWHT NHBLK NHNATIVE NHASIAN NHHWPAC NHOTHER NH2MORE TOTHU OCCUPH VACH POP18 HISP18".split(" ");
const item = (kind, name, cls = "") => `<li class="item ${cls}"><span class="kind">${kind}</span>${name}</li>`;
document.getElementById("functions").innerHTML =
  groups.map((g, i) => `<li class="group"><i class="exp ${i === 6 ? "open" : ""}"></i>${g}</li>`).join("") +
  item("abc", "PARTIAL_ID") + item("abc", "COUNTY", "selected") + '<li class="null">NULL</li>' +
  item("abc", "TRACT") + item("abc", "CITY") + numeric.map((n) => item("1.2", n)).join("");

// tract, city, total, hispanic, white, black
const data = `405701 16742 901 571 128 65
403802 16742 1771 852 548 90
405400 16742 0 0 0 0
534403 17498 2948 2846 75 7
534404 17498 3647 3429 114 45
534301 17498 4636 4402 125 48
534302 17498 3673 3547 54 47
406200 16742 1760 896 585 30
533806 17498 0 0 0 0
406101 16742 3007 1525 1102 77
406102 16742 5828 3212 1701 257
702700 17568 3440 719 1987 79
702801 17568 5205 1618 2147 248
702502 17568 4048 497 1864 818
702600 17568 6069 1082 3225 304
702400 17568 4541 1456 2108 219
- - 4625 758 2934 144
- - 4292 4134 79 24
- - 4609 4492 58 22
- - 6044 3540 50 2346
- - 2983 2360 34 567
- - 104 7 0 97
- - 3486 871 16 2524
- - 0 0 0 0
- - 0 0 0 0
- - 4464 4220 120 15
- - 3652 3387 164 20
- - 312 265 1 38
- - 699 622 2 73
- - 188 79 1 104
- - 5434 3819 54 1425
- - 2506 2104 24 373
- - 452 333 5 100
- - 6207 5052 40 1038
- - 5323 4063 41 1144
542502 15044 4284 2447 25 1731
542601 15044 3016 2567 18 414
542402 15044 3152 1746 48 1249
542501 15044 4307 1755 30 2223
542200 15044 3631 2738 29 771
542401 15044 4912 2755 38 1964
542105 15044 3696 2972 27 639
542106 15044 285 254 1 25
543201 15044 3607 2129 37 1370`.split("\n");
const partial = { 16742: "0371674240...", 17498: "0371749853...", 17568: "0371756870...", 15044: "0371504454..." };
document.getElementById("rows").innerHTML = data.map((line, i) => {
  const [tract, city, ...nums] = line.split(" ");
  const known = tract !== "-";
  const text = known ? [partial[city], "037", tract, city] : ["", "", "", ""];
  return `<tr><th scope="row">${i + 1}</th>` + text.map((t) => `<td>${t}</td>`).join("") +
    nums.map((n) => `<td class="num">${n}.00000</td>`).join("") + "</tr>";
}).join("");

// Census tract layer: hand-digitised outline plus a jittered mesh for the dense urban tracts.
let seed = 7;
const rnd = () => ((seed = (seed * 16807) % 2147483647) / 2147483647);
function mesh(x0, y0, x1, y1, step, keep) {
  const cols = Math.ceil((x1 - x0) / step), rows = Math.ceil((y1 - y0) / step), pts = [];
  for (let r = 0; r <= rows; r++) {
    pts.push([]);
    for (let c = 0; c <= cols; c++) {
      pts[r].push([Math.round(x0 + (c + rnd() * 1.5) * step), Math.round(y0 + (r + rnd() * 1.5) * step)]);
    }
  }
  let d = "";
  for (let r = 0; r < rows; r++) {
    for (let c = 0; c < cols; c++) {
      if (rnd() < keep) d += `M${pts[r][c]}L${pts[r][c + 1]}`;
      if (rnd() < keep) d += `M${pts[r][c]}L${pts[r + 1][c]}`;
    }
  }
  return d;
}
const land = "M57,333L72,335 74,342 102,344 104,350 112,352 114,364 185,366 187,373 210,373 216,366 558,366 559,92 555,86 564,84 564,80 555,76 560,70 560,41 730,41 730,836 668,836 658,828 630,818 620,811 590,811 588,825 572,832 566,848 550,835 530,822 510,795 480,780 460,765 430,737 410,730 395,738 370,744 340,732 332,718 340,708 338,680 325,650 305,630 240,633 226,641 218,630 190,622 160,608 140,606 115,590 105,570 102,550 80,540 45,508 53,500Z";
const zones = [
  ["92,535 150,545 200,535 330,530 400,560 470,590 560,588 620,570 716,590 716,836 590,811 566,848 340,740 300,632 230,636 140,606 112,590", 11, 0.65],
  ["95,535 130,545 138,580 112,590", 5, 0.9],
  ["140,545 200,535 260,540 330,530 390,560 380,600 310,605 200,580", 7, 0.75],
  ["250,560 290,540 330,530 400,570 470,590 560,588 610,590 600,640 540,680 520,720 505,800 430,737 345,735 338,680 305,630", 5, 0.95],
  ["330,600 400,580 520,600 535,680 500,790 430,737 345,725", 4, 0.97],
  ["265,565 300,540 350,535 400,580 350,600", 5, 0.9],
  ["520,750 575,755 578,800 566,848 505,795", 4, 0.95],
  ["540,590 640,575 716,600 716,680 600,680 530,690", 5, 0.78],
  ["640,670 716,660 716,836 665,760", 6, 0.8],
  ["600,730 640,740 716,800 716,836 640,800", 10, 0.8],
  ["365,385 440,400 480,425 470,440 430,470 400,430", 9, 0.85],
  ["290,480 350,478 350,510 315,525 285,505", 7, 0.85],
  ["600,420 690,430 690,500 660,540 610,520", 9, 0.75],
  ["90,480 115,475 165,500 280,490 290,540 110,560", 20, 0.5],
  ["300,430 480,400 470,480 330,500", 28, 0.45],
  ["680,345 716,330 716,370 685,375", 9, 0.7],
];
let clips = "", meshes = "";
zones.forEach(([poly, step, keep], i) => {
  const n = poly.split(/[ ,]/).map(Number), xs = n.filter((_, k) => k % 2 === 0), ys = n.filter((_, k) => k % 2);
  clips += `<clipPath id="z${i}"><polygon points="${poly}"/></clipPath>`;
  meshes += `<path clip-path="url(#z${i})" d="${mesh(Math.min(...xs) - step, Math.min(...ys) - step, Math.max(...xs) + step, Math.max(...ys) + step, step, keep)}"/>`;
});
const tracts = "M559,225L590,212 625,200 650,178 661,178 661,216 730,216M550,398L560,400 630,401 660,378 690,372M549,366L549,500 553,530 545,588M206,366L278,548M240,388L232,392 238,415 262,435 264,450 308,480M240,388L290,393 340,408 368,418M365,366V415M416,366V400M520,366V388L440,384 416,380M487,388V430L508,430V455H480M440,384V405L470,420V440H508M480,457H548M460,470H500V458M462,498L548,502M462,480L462,520 428,515M340,492L380,495 410,485 440,475 460,480M350,520L400,518 425,512 430,530 410,550 470,575 480,590M410,550L370,545M552,480H568V475H596V512H568V480M568,495H596M553,512L566,530 572,540 556,535M200,482V530M165,490H200M200,482L240,480 240,515 225,525M105,480L112,468 150,466 160,470 158,490 130,505 150,525 130,545M670,330L668,315 690,312 700,300 720,305M670,330L690,350 680,375M636,410L650,385 675,372M636,410L640,440 670,445 680,430 720,410M600,420V470L620,480M604,530L610,560 630,590M660,500L690,495 720,490M604,530L640,545 660,540 680,560 690,590M680,560L670,535 695,530 697,550 690,565M308,480L310,460 330,448 355,440 370,425M530,700L560,740 580,755 590,800M560,690L590,740 610,745 640,770 620,811M575,680L600,700 620,745M640,790L660,770 700,800M165,600L190,585 220,600 280,605M190,620L195,605 240,600 250,625";
document.getElementById("map").innerHTML = `<defs><clipPath id="land"><path d="${land}"/></clipPath>${clips}</defs>
  <g transform="translate(24 451) scale(.3333)" fill="none" stroke="#332e30" stroke-width="2.900" stroke-linejoin="round">
    <path d="${land}" fill="#e8718d"/>
    <g clip-path="url(#land)"><path d="${tracts}"/><g stroke-width="2.700">${meshes}</g></g>
    <path fill="#e8718d" d="M280,818L305,822 335,835 350,850 362,862 366,872 358,878 350,870 330,872 318,868 314,855 316,840 300,832 288,828ZM5,880L20,877 40,885 50,897 40,901 18,898 8,890ZM275,966L285,963 292,975 302,998 318,1018 349,1038 330,1044 312,1030 300,1012 290,985ZM50,631L58,635 75,631 64,636Z"/>
    <circle cx="359" cy="868" r="5" fill="#332e30"/>
  </g>`;
```
